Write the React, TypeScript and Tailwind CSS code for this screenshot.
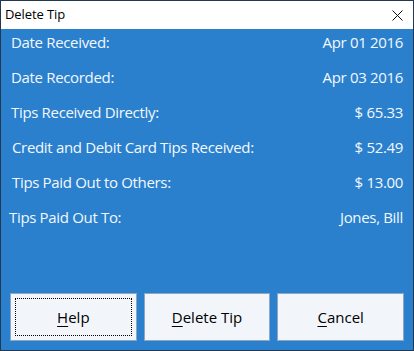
const rows: { label: string; value: string; indent: string }[] = [
  { label: 'Date Received:', value: 'Apr 01 2016', indent: 'pl-[10px]' },
  { label: 'Date Recorded:', value: 'Apr 03 2016', indent: 'pl-[10px]' },
  { label: 'Tips Received Directly:', value: '$ 65.33', indent: 'pl-[10px]' },
  { label: 'Credit and Debit Card Tips Received:', value: '$ 52.49', indent: 'pl-[11px]' },
  { label: 'Tips Paid Out to Others:', value: '$ 13.00', indent: 'pl-[11px]' },
  { label: 'Tips Paid Out To:', value: 'Jones, Bill', indent: 'pl-[8px]' },
];

function DialogButton({ mnemonic, rest, focused }: { mnemonic: string; rest: string; focused?: boolean }) {
  return (
    <button
      type="button"
      className="relative flex h-[48px] flex-1 items-center justify-center border border-[#8ea6bf] bg-[#f2f6fb] text-[15px] text-black"
    >
      {focused && <span className="absolute inset-[4px] border border-dotted border-black" />}
      <span>
        <span className="underline underline-offset-[3px]">{mnemonic}</span>
        {rest}
      </span>
    </button>
  );
}

export default function App() {
  return (
    <div
      className="flex h-[351px] w-[414px] flex-col border border-[#23384f] bg-[#2a80cd]"
      style={{ fontFamily: '"Open Sans", "Noto Sans", sans-serif' }}
    >
      {/* Title bar */}
      <div className="flex h-[28px] items-center justify-between bg-white pl-[4px] pr-[9px] text-[13px] tracking-[-0.1px] text-black">
        <span>Delete Tip</span>
        <svg width="11" height="11" viewBox="0 0 11 11" className="mr-[1px]">
          <path d="M0.5 0.5 L10.5 10.5 M10.5 0.5 L0.5 10.5" stroke="#111" strokeWidth="1" fill="none" />
        </svg>
      </div>

      {/* Body */}
      <div className="flex flex-1 flex-col justify-between pt-[1px] pb-[9px]">
        <div className="flex flex-col gap-[11px] pr-[10px] text-[15px] tracking-[-0.33px] text-[#f3f8fd]">
          {rows.map((r) => (
            <div key={r.label} className={`flex h-[24px] items-center justify-between ${r.indent}`}>
              <span>{r.label}</span>
              <span>{r.value}</span>
            </div>
          ))}
        </div>

        <div className="flex gap-[7px] px-[9px]">
          <DialogButton mnemonic="H" rest="elp" focused />
          <DialogButton mnemonic="D" rest="elete Tip" />
          <DialogButton mnemonic="C" rest="ancel" />
        </div>
      </div>
    </div>
  );
}
